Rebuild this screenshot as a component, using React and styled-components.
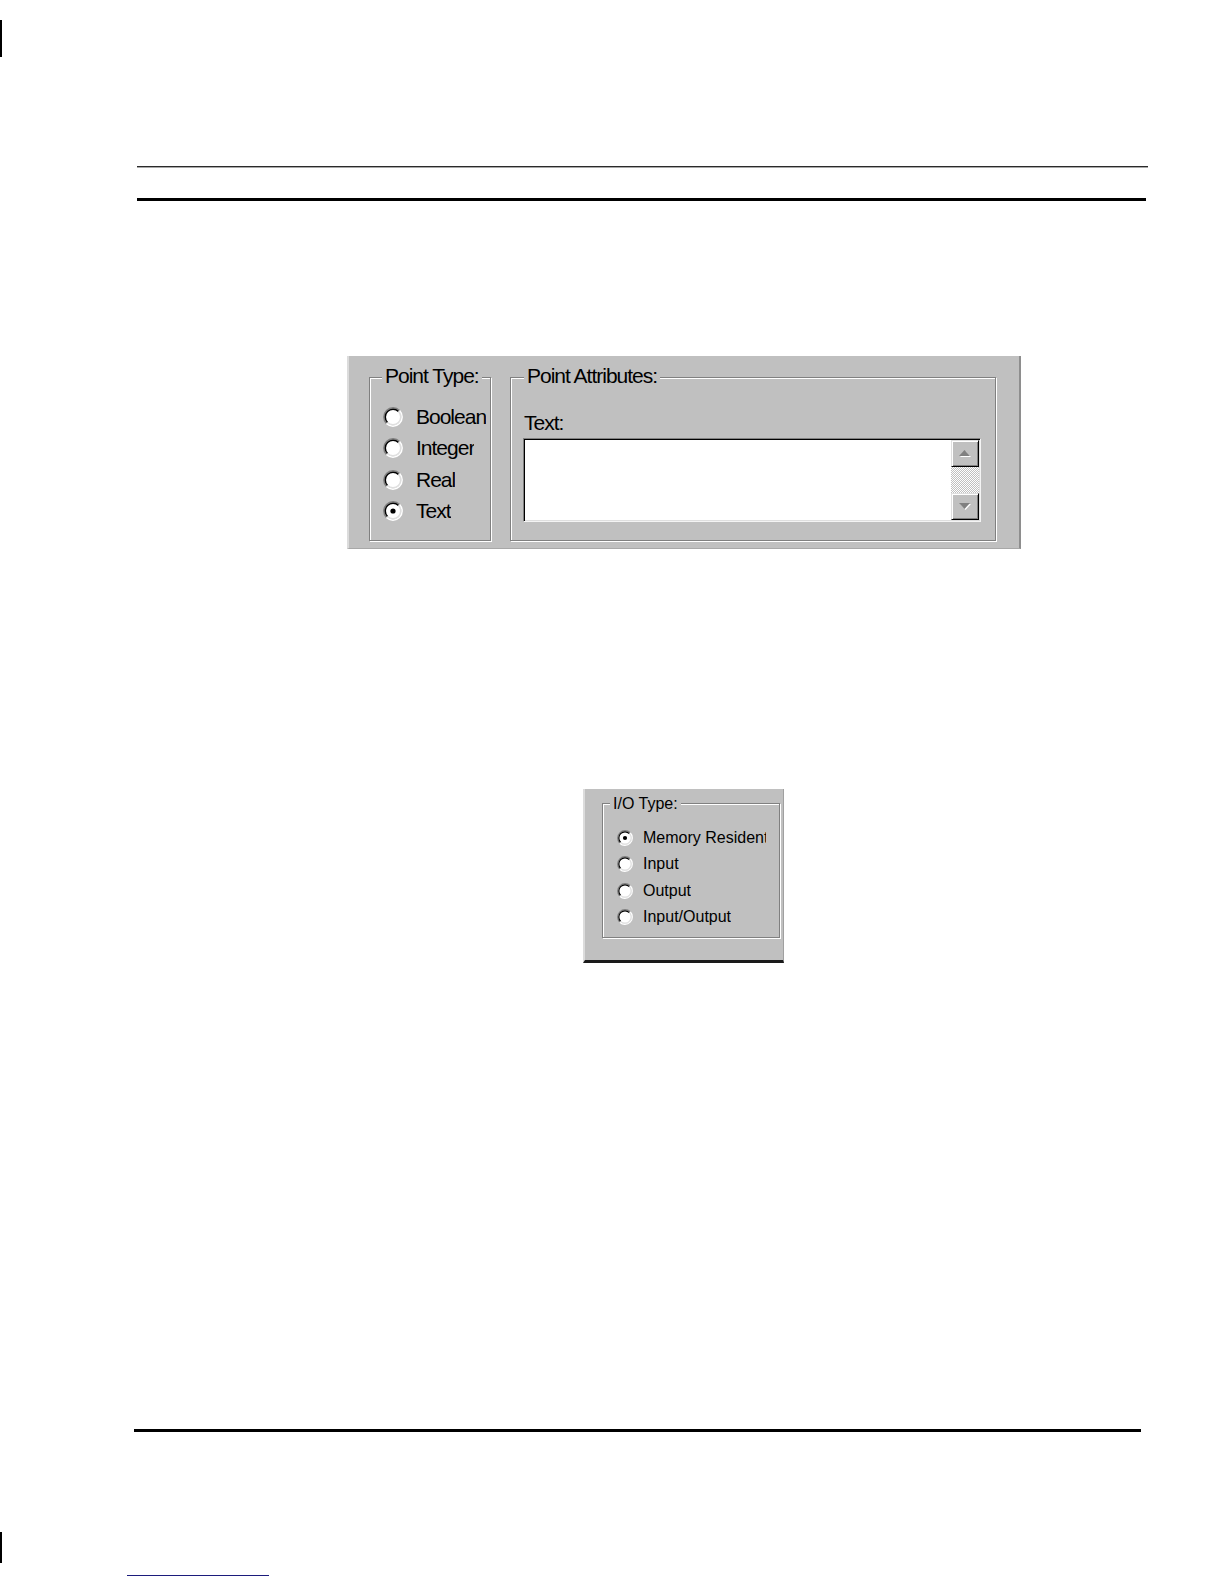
import React from 'react';
import styled, { createGlobalStyle } from 'styled-components';

const GlobalStyle = createGlobalStyle`
  html, body {
    margin: 0;
    padding: 0;
    background: #fff;
  }
  body {
    font-family: 'Liberation Sans', Arial, sans-serif;
    color: #000;
  }
`;

const Page = styled.div`
  width: 1224px;
  height: 1584px;
  display: flex;
  flex-direction: column;
  align-items: flex-start;
  overflow: hidden;
`;

const EdgeMark = styled.div`
  width: 2px;
  height: ${(p) => p.$h}px;
  margin-top: ${(p) => p.$top}px;
  background: #000;
`;

const HairRule = styled.div`
  box-sizing: border-box;
  margin-top: ${(p) => p.$top}px;
  margin-left: ${(p) => p.$left}px;
  width: ${(p) => p.$width}px;
  height: 2px;
  border-top: 1px solid #2a2a2a;
  border-bottom: 1px solid #a8a8a8;
`;

const Rule = styled.div`
  margin-top: ${(p) => p.$top}px;
  margin-left: ${(p) => p.$left}px;
  width: ${(p) => p.$width}px;
  height: ${(p) => p.$thick}px;
  background: ${(p) => p.$color || '#000'};
`;

const DialogPanel = styled.div`
  box-sizing: border-box;
  display: flex;
  align-items: flex-start;
  gap: ${(p) => p.$gap || 0}px;
  margin-top: ${(p) => p.$top}px;
  margin-left: ${(p) => p.$left}px;
  width: ${(p) => p.$width}px;
  height: ${(p) => p.$height}px;
  padding: ${(p) => p.$pad};
  background: #c0c0c0;
  border-left: 2px solid #dcdcdc;
  border-right: ${(p) => p.$right};
  border-bottom: ${(p) => p.$bottom};
`;

const GroupBox = styled.div`
  position: relative;
  box-sizing: border-box;
  width: ${(p) => p.$width}px;
  height: ${(p) => p.$height}px;
  padding: ${(p) => p.$pad};
  border: 1px solid #808080;
  box-shadow: inset 1px 1px 0 #fff, 1px 1px 0 #fff;
`;

const Caption = styled.span`
  position: absolute;
  top: ${(p) => p.$top}px;
  left: ${(p) => p.$left}px;
  padding: 0 3px;
  background: #c0c0c0;
  font-size: ${(p) => p.$size}px;
  line-height: ${(p) => p.$lh}px;
  letter-spacing: ${(p) => p.$spacing || 0}px;
  white-space: nowrap;
`;

const OptionList = styled.div`
  display: flex;
  flex-direction: column;
`;

const OptionRow = styled.div`
  display: flex;
  align-items: center;
  height: ${(p) => p.$h}px;
  gap: ${(p) => p.$gap}px;
`;

const OptionLabel = styled.span`
  display: block;
  font-size: ${(p) => p.$size}px;
  line-height: ${(p) => p.$lh}px;
  letter-spacing: ${(p) => p.$spacing || 0}px;
  white-space: nowrap;
  overflow: hidden;
  max-width: ${(p) => (p.$clip ? `${p.$clip}px` : 'none')};
`;

const RadioSvg = styled.svg`
  flex: none;
  width: ${(p) => p.$size}px;
  height: ${(p) => p.$size}px;
`;

const FieldLabel = styled.div`
  margin-left: 1px;
  font-size: 21px;
  line-height: 24px;
  letter-spacing: -1px;
`;

const TextArea = styled.div`
  box-sizing: border-box;
  display: flex;
  justify-content: flex-end;
  width: 458px;
  height: 84px;
  margin-top: 3px;
  background: #fff;
  border: 1px solid;
  border-color: #808080 #f4f4f4 #f4f4f4 #808080;
  box-shadow: inset 1px 1px 0 #000, inset -1px -1px 0 #dfdfdf;
`;

const ScrollBar = styled.div`
  display: flex;
  flex-direction: column;
  width: 28px;
  margin: 1px 1px 1px 0;
`;

const ScrollButton = styled.div`
  box-sizing: border-box;
  display: flex;
  align-items: center;
  justify-content: center;
  height: 27px;
  background: #c0c0c0;
  border: 1px solid;
  border-color: #dfdfdf #000 #000 #dfdfdf;
  box-shadow: inset 1px 1px 0 #fff, inset -1px -1px 0 #808080;
`;

const ScrollTrack = styled.div`
  flex: 1;
  background: repeating-conic-gradient(#c0c0c0 0 25%, #fff 0 50%) 0 0 / 2px 2px;
`;

const Radio = ({ size, checked }) => (
  <RadioSvg viewBox="0 0 20 20" $size={size}>
    <circle cx="10" cy="10" r="8.5" fill="#fff" />
    <path d="M3.46 16.54 A9.25 9.25 0 0 1 16.54 3.46" stroke="#808080" strokeWidth="1.5" fill="none" />
    <path d="M16.54 3.46 A9.25 9.25 0 0 1 3.46 16.54" stroke="#fff" strokeWidth="1.5" fill="none" />
    <path d="M4.52 15.48 A7.75 7.75 0 0 1 15.48 4.52" stroke="#000" strokeWidth="1.5" fill="none" />
    <path d="M15.48 4.52 A7.75 7.75 0 0 1 4.52 15.48" stroke="#dfdfdf" strokeWidth="1.5" fill="none" />
    {checked && <circle cx="10" cy="10" r="2.6" fill="#000" />}
  </RadioSvg>
);

const Arrow = ({ down }) => (
  <svg width="14" height="9" viewBox="0 0 14 9">
    {down ? (
      <>
        <polygon points="2,2 13,2 7.5,8" fill="#fff" />
        <polygon points="1,1 12,1 6.5,7" fill="#808080" />
      </>
    ) : (
      <>
        <polygon points="2,8 13,8 7.5,2" fill="#fff" />
        <polygon points="1,7 12,7 6.5,1" fill="#808080" />
      </>
    )}
  </svg>
);

const pointTypes = ['Boolean', 'Integer', 'Real', 'Text'];
const ioTypes = ['Memory Resident', 'Input', 'Output', 'Input/Output'];

export default function App() {
  return (
    <>
      <GlobalStyle />
      <Page>
        <EdgeMark $top={20} $h={37} />
        <HairRule $top={109} $left={137} $width={1011} />
        <Rule $top={30} $left={137} $width={1009} $thick={3} />

        <DialogPanel
          $top={155}
          $left={347}
          $width={674}
          $height={193}
          $gap={19}
          $pad="21px 0 0 20px"
          $right="2px solid #8e8e8e"
          $bottom="1px solid #a8a8a8"
        >
          <GroupBox $width={122} $height={164} $pad="23px 0 0 13px">
            <Caption $top={-14} $left={12} $size={21} $lh={24} $spacing={-1}>
              Point Type:
            </Caption>
            <OptionList>
              {pointTypes.map((t) => (
                <OptionRow key={t} $h={31.5} $gap={13}>
                  <Radio size={20} checked={t === 'Text'} />
                  <OptionLabel $size={21} $lh={24} $spacing={-1}>
                    {t}
                  </OptionLabel>
                </OptionRow>
              ))}
            </OptionList>
          </GroupBox>

          <GroupBox $width={486} $height={164} $pad="33px 0 0 12px">
            <Caption $top={-14} $left={13} $size={21} $lh={24} $spacing={-1}>
              Point Attributes:
            </Caption>
            <FieldLabel>Text:</FieldLabel>
            <TextArea>
              <ScrollBar>
                <ScrollButton>
                  <Arrow />
                </ScrollButton>
                <ScrollTrack />
                <ScrollButton>
                  <Arrow down />
                </ScrollButton>
              </ScrollBar>
            </TextArea>
          </GroupBox>
        </DialogPanel>

        <DialogPanel
          $top={240}
          $left={583}
          $width={201}
          $height={174}
          $pad="14px 0 0 17px"
          $right="1px solid #a0a0a0"
          $bottom="3px solid #1a1a1a"
        >
          <GroupBox $width={178} $height={135} $pad="21px 0 0 14px">
            <Caption $top={-9} $left={7} $size={16} $lh={18}>
              I/O Type:
            </Caption>
            <OptionList>
              {ioTypes.map((t) => (
                <OptionRow key={t} $h={26.33} $gap={10}>
                  <Radio size={16} checked={t === 'Memory Resident'} />
                  <OptionLabel $size={16} $lh={18} $clip={123}>
                    {t}
                  </OptionLabel>
                </OptionRow>
              ))}
            </OptionList>
          </GroupBox>
        </DialogPanel>

        <Rule $top={466} $left={134} $width={1007} $thick={3} />
        <EdgeMark $top={100} $h={31} />
        <Rule $top={12} $left={127} $width={142} $thick={1} $color="#1c1c7c" />
      </Page>
    </>
  );
}
